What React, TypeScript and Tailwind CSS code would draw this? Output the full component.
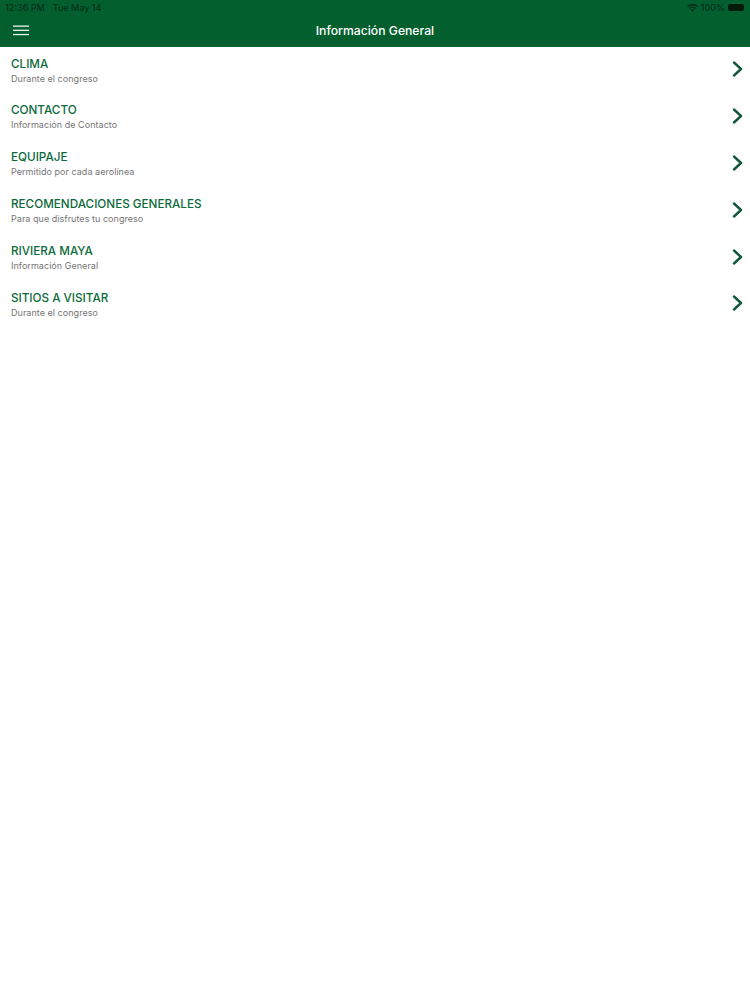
const rows = [
  ["CLIMA", "Durante el congreso"],
  ["CONTACTO", "Información de Contacto"],
  ["EQUIPAJE", "Permitido por cada aerolínea"],
  ["RECOMENDACIONES GENERALES", "Para que disfrutes tu congreso"],
  ["RIVIERA MAYA", "Información General"],
  ["SITIOS A VISITAR", "Durante el congreso"],
];

export default function App() {
  return (
    <div className="min-h-[1000px] bg-white font-['Inter','Liberation_Sans',sans-serif]">
      <header className="h-[47px] bg-[#03602e]">
        <div className="h-[15px] flex items-center justify-between pl-[5px] pr-[6px] text-[9px] font-medium text-[#02301a]">
          <div className="flex gap-[8px] whitespace-nowrap">
            <span>12:36 PM</span>
            <span>Tue May 14</span>
          </div>
          <div className="flex items-center gap-[3px]">
            <svg width="11" height="8" viewBox="0 0 11 8" fill="#02301a">
              <path d="M5.5 8 3.6 5.8a2.8 2.8 0 0 1 3.8 0L5.5 8ZM2.8 4.9 1.9 3.9a5.3 5.3 0 0 1 7.2 0l-.9 1a4 4 0 0 0-5.4 0ZM1.1 3 0 1.9a8 8 0 0 1 11 0L9.9 3a6.5 6.5 0 0 0-8.8 0Z" />
            </svg>
            <span>100%</span>
            <div className="w-[16px] h-[7px] rounded-[2px] bg-[#021a0c]" />
          </div>
        </div>
        <div className="h-[32px] flex items-center justify-center relative">
          <svg className="absolute left-[13px] top-[10px]" width="16" height="11" viewBox="0 0 16 11" fill="#e8f3ec">
            <rect x="0" y="0.5" width="16" height="1.3" />
            <rect x="0" y="4.7" width="16" height="1.3" />
            <rect x="0" y="8.9" width="16" height="1.3" />
          </svg>
          <span className="text-white text-[12.2px] font-medium">Información General</span>
        </div>
      </header>
      <ul>
        {rows.map(([title, sub]) => (
          <li key={title} className="h-[46.9px] flex justify-between pl-[11px] pr-[7px]">
            <div className="flex flex-col pt-[9.5px]">
              <span className="text-[11.7px] leading-[15px] text-[#0a6a3a] font-medium">{title}</span>
              <span className="text-[9px] leading-[13px] text-[#767676] tracking-[0.04px]">{sub}</span>
            </div>
            <svg className="mt-[14px]" width="11" height="16" viewBox="0 0 11 16" fill="none" stroke="#14583c" strokeWidth="2.4" strokeLinecap="round" strokeLinejoin="round">
              <path d="M2 1.5 9 8l-7 6.5" />
            </svg>
          </li>
        ))}
      </ul>
    </div>
  );
}
